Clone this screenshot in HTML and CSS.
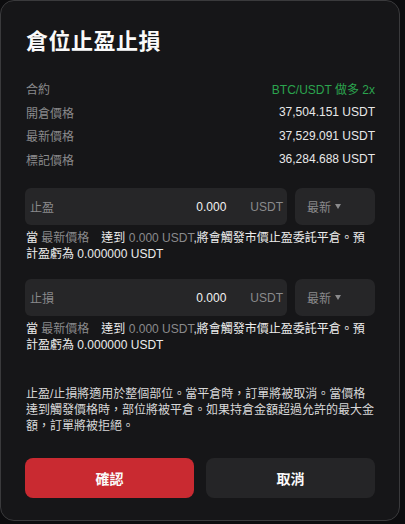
FILE: index.html
```html
<!DOCTYPE html>
<html lang="zh-Hant">
<head>
<meta charset="utf-8">
<link rel="stylesheet" href="styles.css">
</head>
<body>
<div class="modal">
  <h1 class="title">倉位止盈止損</h1>
  <div class="info">
    <div class="row"><span class="label">合約</span><span class="value green">BTC/USDT 做多 2x</span></div>
    <div class="row"><span class="label">開倉價格</span><span class="value">37,504.151 USDT</span></div>
    <div class="row"><span class="label">最新價格</span><span class="value">37,529.091 USDT</span></div>
    <div class="row"><span class="label">標記價格</span><span class="value">36,284.688 USDT</span></div>
  </div>

  <div class="field">
    <div class="inputs">
      <div class="input"><span class="ph">止盈</span><span class="num">0.000</span><span class="unit">USDT</span></div>
      <div class="select"><span>最新</span><span class="caret"></span></div>
    </div>
    <p class="hint">當 <span class="dim">最新價格</span><span class="gap"></span>達到 <span class="dim">0.000 USDT</span>,將會觸發市價止盈委託平倉。預計盈虧為 0.000000 USDT</p>
  </div>

  <div class="field">
    <div class="inputs">
      <div class="input"><span class="ph">止損</span><span class="num">0.000</span><span class="unit">USDT</span></div>
      <div class="select"><span>最新</span><span class="caret"></span></div>
    </div>
    <p class="hint">當 <span class="dim">最新價格</span><span class="gap"></span>達到 <span class="dim">0.000 USDT</span>,將會觸發市價止盈委託平倉。預計盈虧為 0.000000 USDT</p>
  </div>

  <p class="note">止盈/止損將適用於整個部位。當平倉時，訂單將被取消。當價格達到觸發價格時，部位將被平倉。如果持倉金額超過允許的最大金額，訂單將被拒絕。</p>

  <div class="buttons">
    <button class="btn confirm">確認</button>
    <button class="btn cancel">取消</button>
  </div>
</div>
</body>
</html>
```

FILE: styles.css
```css
* { box-sizing: border-box; }
html, body {
  margin: 0;
  padding: 0;
  background: #0c0c0e;
  font-family: "Liberation Sans", "Noto Sans CJK TC", sans-serif;
  color: #e8e8e8;
}
.modal {
  width: 400px;
  height: 521px;
  background: #161618;
  border: 1px solid #3a3a3c;
  border-radius: 14px;
  padding: 21px 24px 0 24px;
}
.title {
  margin: 0 0 0 1px;
  font-family: "Noto Sans CJK TC", sans-serif;
  font-size: 22px;
  font-weight: 700;
  line-height: 34px;
  color: #fafafa;
  letter-spacing: 0.5px;
}
.info {
  margin-top: 21px;
  padding-left: 1px;
  display: flex;
  flex-direction: column;
}
.row {
  display: flex;
  justify-content: space-between;
  align-items: center;
  height: 23.5px;
  font-size: 12px;
}
.label { color: #8a8a8c; }
.value { color: #e8e8e8; }
.green { color: #2ba44e; }
.field { margin-top: 17px; }
.inputs {
  display: flex;
  gap: 8px;
}
.input {
  flex: 0 0 262px;
  height: 37px;
  background: #262628;
  border-radius: 6px;
  display: flex;
  align-items: center;
  padding: 0 4px 0 5px;
  font-size: 12px;
}
.ph { color: #8a8a8c; flex: 1; }
.num { color: #f2f2f2; margin-right: 24px; }
.unit { color: #8a8a8c; }
.select {
  flex: 0 0 80px;
  height: 37px;
  background: #262628;
  border-radius: 7px;
  display: flex;
  align-items: center;
  padding-left: 12px;
  font-size: 12px;
  color: #8a8a8c;
  gap: 4px;
}
.caret {
  width: 0; height: 0;
  border-left: 3px solid transparent;
  border-right: 3px solid transparent;
  border-top: 5px solid #8a8a8c;
}
.hint {
  margin: 5px 0 0 1px;
  font-size: 12px;
  line-height: 16px;
  color: #ececec;
}
.gap { display: inline-block; width: 12px; }
.dim { color: #8a8a8c; }
.note {
  margin: 33px 0 0 1px;
  font-size: 12px;
  line-height: 16px;
  color: #d8d8d8;
}
.buttons {
  margin-top: 24px;
  display: flex;
  gap: 12px;
}
.btn {
  flex: 1;
  height: 40px;
  border: none;
  border-radius: 8px;
  font-family: "Noto Sans CJK TC", sans-serif;
  font-size: 14px;
  font-weight: 700;
  color: #fafafa;
}
.confirm { background: #c92a31; }
.cancel { background: #252527; }
```
